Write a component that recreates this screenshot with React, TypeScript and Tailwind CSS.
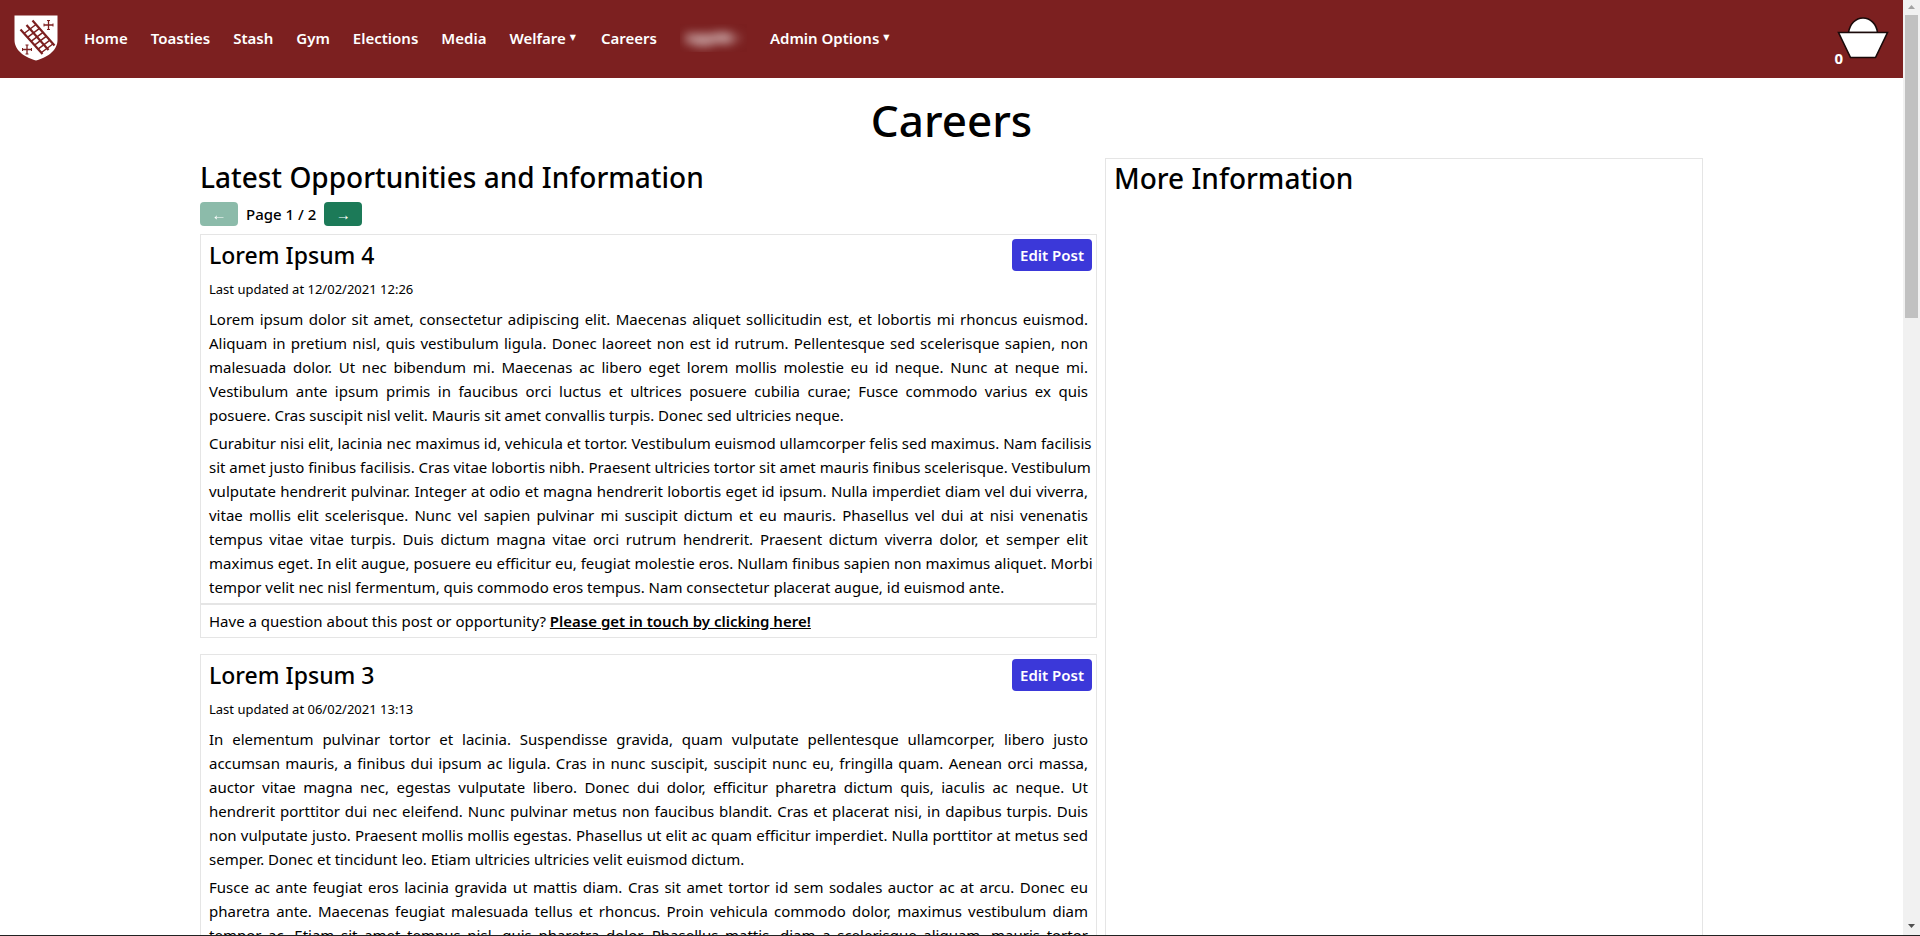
import React from "react";

type Post = { title: string; updated: string; paragraphs: string[][]; openEnded?: boolean };

const POSTS: Post[] = [
  {
    title: "Lorem Ipsum 4",
    updated: "12/02/2021 12:26",
    paragraphs: [
      [
        "Lorem ipsum dolor sit amet, consectetur adipiscing elit. Maecenas aliquet sollicitudin est, et lobortis mi rhoncus euismod.",
        "Aliquam in pretium nisl, quis vestibulum ligula. Donec laoreet non est id rutrum. Pellentesque sed scelerisque sapien, non",
        "malesuada dolor. Ut nec bibendum mi. Maecenas ac libero eget lorem mollis molestie eu id neque. Nunc at neque mi.",
        "Vestibulum ante ipsum primis in faucibus orci luctus et ultrices posuere cubilia curae; Fusce commodo varius ex quis",
        "posuere. Cras suscipit nisl velit. Mauris sit amet convallis turpis. Donec sed ultricies neque.",
      ],
      [
        "Curabitur nisi elit, lacinia nec maximus id, vehicula et tortor. Vestibulum euismod ullamcorper felis sed maximus. Nam facilisis",
        "sit amet justo finibus facilisis. Cras vitae lobortis nibh. Praesent ultricies tortor sit amet mauris finibus scelerisque. Vestibulum",
        "vulputate hendrerit pulvinar. Integer at odio et magna hendrerit lobortis eget id ipsum. Nulla imperdiet diam vel dui viverra,",
        "vitae mollis elit scelerisque. Nunc vel sapien pulvinar mi suscipit dictum et eu mauris. Phasellus vel dui at nisi venenatis",
        "tempus vitae vitae turpis. Duis dictum magna vitae orci rutrum hendrerit. Praesent dictum viverra dolor, et semper elit",
        "maximus eget. In elit augue, posuere eu efficitur eu, feugiat molestie eros. Nullam finibus sapien non maximus aliquet. Morbi",
        "tempor velit nec nisl fermentum, quis commodo eros tempus. Nam consectetur placerat augue, id euismod ante.",
      ],
    ],
  },
  {
    title: "Lorem Ipsum 3",
    updated: "06/02/2021 13:13",
    openEnded: true,
    paragraphs: [
      [
        "In elementum pulvinar tortor et lacinia. Suspendisse gravida, quam vulputate pellentesque ullamcorper, libero justo",
        "accumsan mauris, a finibus dui ipsum ac ligula. Cras in nunc suscipit, suscipit nunc eu, fringilla quam. Aenean orci massa,",
        "auctor vitae magna nec, egestas vulputate libero. Donec dui dolor, efficitur pharetra dictum quis, iaculis ac neque. Ut",
        "hendrerit porttitor dui nec eleifend. Nunc pulvinar metus non faucibus blandit. Cras et placerat nisi, in dapibus turpis. Duis",
        "non vulputate justo. Praesent mollis mollis egestas. Phasellus ut elit ac quam efficitur imperdiet. Nulla porttitor at metus sed",
        "semper. Donec et tincidunt leo. Etiam ultricies ultricies velit euismod dictum.",
      ],
      [
        "Fusce ac ante feugiat eros lacinia gravida ut mattis diam. Cras sit amet tortor id sem sodales auctor ac at arcu. Donec eu",
        "pharetra ante. Maecenas feugiat malesuada tellus et rhoncus. Proin vehicula commodo dolor, maximus vestibulum diam",
        "tempor ac. Etiam sit amet tempus nisl, quis pharetra dolor. Phasellus mattis, diam a scelerisque aliquam, mauris tortor",
      ],
    ],
  },
];

function Crest() {
  return (
    <svg viewBox="0 0 44 46" className="h-[46px] w-11" aria-hidden="true">
      <path d="M0.5 0.5H43.5V25C43.5 36 32 43 22 45.5C12 43 0.5 36 0.5 25Z" fill="#fff" />
      <g stroke="#7c2020" fill="none">
        <path d="M6.5 14.5L28.5 39M12.5 10L34.5 35M18.5 5.5L40.5 30.5" strokeWidth="2.2" />
        <path
          d="M10 18.5L22 9.500M13.500 22.400L25.500 13.400M17 26.300L29 17.300M20.500 30.200L32.500 21.200M24 34.100L36 25.100M27.500 37.500L39.500 28.500"
          strokeWidth="1.5"
        />
        <path d="M34.500 5.500V14.500M30 10H39M13 30V39M8.500 34.500H17.500" strokeWidth="1.3" />
        <path
          d="M33 5.500H36M33 14.500H36M30 8.500V11.500M39 8.500V11.500M11.500 30H14.500M11.500 39H14.500M8.500 33V36M17.500 33V36"
          strokeWidth="1"
        />
      </g>
    </svg>
  );
}

function Basket() {
  return (
    <svg viewBox="0 0 52 42" className="h-[42px] w-[52px]" aria-hidden="true">
      <g fill="#fff" stroke="#1a0a0a" strokeWidth="1.6">
        <path d="M11.500 15.500C13 7 18.500 1 26 1C33.500 1 39.500 7 40.500 15.500Z" />
        <path d="M1.500 15.500H50.500L38.500 40.500H13.500Z" />
      </g>
    </svg>
  );
}

function HiddenName() {
  return (
    <svg viewBox="0 0 67 28" className="h-7 w-[67px]" aria-hidden="true">
      <defs>
        <filter id="soften" x="-30%" y="-60%" width="160%" height="220%">
          <feGaussianBlur stdDeviation="5" />
        </filter>
      </defs>
      <rect width="67" height="28" fill="#7a1f1f" />
      <g filter="url(#soften)" fill="#fff">
        <rect x="5" y="9" width="48" height="11" opacity="0.42" />
        <rect x="14" y="13" width="18" height="11" opacity="0.25" />
        <rect x="34" y="7" width="16" height="12" opacity="0.2" />
        <rect x="54" y="11" width="7" height="6" opacity="0.25" />
      </g>
    </svg>
  );
}

function NavMenu({ label }: { label: string }) {
  return (
    <button type="button" className="flex items-center gap-1 pr-[2px] font-semibold">
      {label}
      <span className="font-['DejaVu_Sans',sans-serif] text-[8px] leading-none">▼</span>
    </button>
  );
}

function Header() {
  return (
    <header className="flex h-[78px] shrink-0 items-center bg-[#7c2020] px-[14px] pb-[2px] text-[15px] leading-6 font-semibold text-white">
      <a href="#home" aria-label="Home page">
        <Crest />
      </a>
      <nav className="ml-[26px] flex items-center gap-[23px]">
        <a href="#home">Home</a>
        <a href="#toasties">Toasties</a>
        <a href="#stash">Stash</a>
        <a href="#gym">Gym</a>
        <a href="#elections">Elections</a>
        <a href="#media">Media</a>
        <NavMenu label="Welfare" />
        <a href="#careers">Careers</a>
        <HiddenName />
        <NavMenu label="Admin Options" />
      </nav>
      <a href="#basket" className="ml-auto flex items-end" aria-label="Basket, 0 items">
        <span className="-mr-[6px] -mb-[11px] font-bold">0</span>
        <Basket />
      </a>
    </header>
  );
}

function Paragraph({ lines, openEnded }: { lines: string[]; openEnded: boolean }) {
  return (
    <p className="leading-6">
      {lines.map((line, i) => (
        <span
          key={line}
          className={
            i === lines.length - 1 && !openEnded
              ? "block whitespace-nowrap"
              : "block whitespace-nowrap text-justify [text-align-last:justify]"
          }
        >
          {line}{" "}
        </span>
      ))}
    </p>
  );
}

function PostCard({ post }: { post: Post }) {
  return (
    <article className="mb-4">
      <div className="border border-[#e5e5e5] py-1 pr-1 pl-2">
        <div className="flex items-center justify-between">
          <h3 className="text-[23px] leading-8 font-medium">{post.title}</h3>
          <button type="button" className="h-8 rounded bg-[#3b38d9] px-2 font-semibold text-white">
            Edit Post
          </button>
        </div>
        <div className="pr-1">
          <p className="my-2 text-[13px] leading-5">Last updated at {post.updated}</p>
          <div className="flex flex-col gap-1">
            {post.paragraphs.map((lines, i) => (
              <Paragraph
                key={lines[0]}
                lines={lines}
                openEnded={Boolean(post.openEnded) && i === post.paragraphs.length - 1}
              />
            ))}
          </div>
        </div>
      </div>
      <p className="border border-[#e5e5e5] px-2 py-1 leading-6">
        Have a question about this post or opportunity?{" "}
        <a href="#contact" className="font-semibold underline">
          Please get in touch by clicking here!
        </a>
      </p>
    </article>
  );
}

function ScrollBar() {
  return (
    <div className="flex w-[17px] shrink-0 flex-col items-center bg-[#f1f1f1]" aria-hidden="true">
      <svg viewBox="0 0 17 15" className="h-[15px] w-[17px] shrink-0">
        <path d="M5 9H12L8.500 5Z" fill="#a3a3a3" />
      </svg>
      <div className="h-[303px] w-[13px] shrink-0 bg-[#c1c1c1]" />
      <svg viewBox="0 0 17 17" className="mt-auto h-[17px] w-[17px] shrink-0">
        <path d="M5 6H12L8.500 10Z" fill="#505050" />
      </svg>
    </div>
  );
}

export default function App() {
  return (
    <div className="flex h-screen overflow-hidden border-b border-[#222] bg-white font-['Noto_Sans',sans-serif] text-[15px] text-black">
      <div className="flex min-w-0 flex-1 flex-col overflow-hidden">
        <Header />
        <main className="flex min-h-0 flex-1 flex-col px-[200px]">
          <h1 className="pt-4 pb-3 text-center text-[44px] leading-[52px] font-medium">Careers</h1>
          <div className="grid min-h-0 flex-1 grid-cols-[3fr_2fr] gap-2">
            <section className="min-w-0">
              <h2 className="text-[28px] leading-[38px] font-medium">Latest Opportunities and Information</h2>
              <div className="mt-[6px] mb-2 flex h-6 items-center gap-2 font-medium">
                <button
                  type="button"
                  disabled
                  aria-label="Previous page"
                  className="h-6 w-[38px] rounded bg-[#1c7a58] leading-6 text-white opacity-50"
                >
                  ←
                </button>
                <span>Page 1 / 2</span>
                <button
                  type="button"
                  aria-label="Next page"
                  className="h-6 w-[38px] rounded bg-[#1c7a58] leading-6 text-white"
                >
                  →
                </button>
              </div>
              {POSTS.map((post) => (
                <PostCard key={post.title} post={post} />
              ))}
            </section>
            <aside className="min-w-0 border border-b-0 border-[#e5e5e5] px-2">
              <h2 className="text-[28px] leading-[38px] font-medium">More Information</h2>
            </aside>
          </div>
        </main>
      </div>
      <ScrollBar />
    </div>
  );
}
